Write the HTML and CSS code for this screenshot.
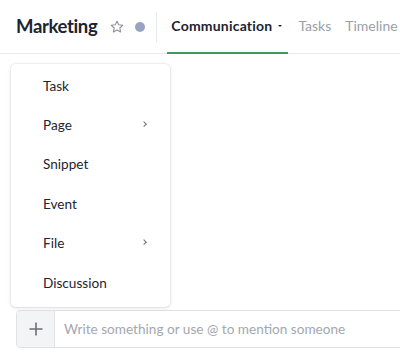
FILE: index.html
```html
<!DOCTYPE html>
<html>
<head>
<meta charset="utf-8">
<link rel="stylesheet" href="styles.css">
</head>
<body>
<div class="page">
  <header class="header">
    <h1 class="title">Marketing</h1>
    <svg class="star" width="16" height="16" viewBox="0 0 24 24"><path d="M12 3.2l2.6 5.5 6 .7-4.4 4.1 1.2 5.9L12 16.5l-5.4 2.9 1.2-5.9L3.4 9.4l6-.7z" fill="none" stroke="#8a8f98" stroke-width="1.6" stroke-linejoin="round"/></svg>
    <span class="dot"></span>
    <span class="sep"></span>
    <nav class="tabs">
      <div class="tab active">Communication <span class="caret"></span></div>
      <div class="tab">Tasks</div>
      <div class="tab">Timeline</div>
    </nav>
  </header>
  <div class="feed"></div>
  <div class="composer">
    <div class="plus">
      <svg width="14" height="14" viewBox="0 0 14 14"><path d="M7 0.5v13M0.5 7h13" stroke="#6b6f76" stroke-width="1.6"/></svg>
    </div>
    <div class="placeholder">Write something or use @ to mention someone</div>
  </div>
  <ul class="menu">
    <li class="item">Task</li>
    <li class="item">Page <span class="chev"></span></li>
    <li class="item">Snippet</li>
    <li class="item">Event</li>
    <li class="item">File <span class="chev"></span></li>
    <li class="item">Discussion</li>
  </ul>
</div>
</body>
</html>
```
FILE: styles.css
```css
* { box-sizing: border-box; }
html, body { margin: 0; padding: 0; }
body {
  font-family: "Lato", "Open Sans", sans-serif;
  color: #1f2430;
  background: #fff;
  overflow: hidden;
}
.page {
  position: relative;
  height: 362px;
  width: 400px;
  display: flex;
  flex-direction: column;
  overflow: hidden;
}
.header {
  height: 54px;
  flex: none;
  display: flex;
  align-items: center;
  padding-left: 16px;
  border-bottom: 1px solid #e6e8eb;
}
.title {
  margin: 0 0 1px 0;
  font-size: 18.5px;
  font-weight: 700;
  color: #1c2331;
  letter-spacing: -0.35px;
}
.star { margin-left: 12px; flex: none; }
.dot {
  width: 10px; height: 10px;
  border-radius: 50%;
  background: #98a4c0;
  margin-left: 10px;
  flex: none;
}
.sep {
  width: 1px;
  height: 30px;
  background: #e6e8eb;
  margin-left: 11px;
  flex: none;
}
.tabs {
  display: flex;
  align-self: stretch;
  margin-left: 10px;
  gap: 6px;
}
.tab {
  display: flex;
  align-items: center;
  font-size: 14px;
  color: #9aa0a8;
  white-space: nowrap;
  margin-bottom: -1px;
  border-bottom: 2px solid transparent;
  padding: 0 4px 1px 4px;
}
.tab.active {
  font-weight: 700;
  color: #1c2331;
  letter-spacing: 0.2px;
  border-bottom-color: #3c9a5f;
  padding-right: 6px;
}
.caret {
  display: inline-block;
  width: 0; height: 0;
  border-left: 2.5px solid transparent;
  border-right: 2.5px solid transparent;
  border-top: 2.5px solid #1c2331;
  margin-left: 6px;
  margin-top: 1px;
}
.feed { flex: 1; }
.composer {
  flex: none;
  display: flex;
  height: 38px;
  width: 400px;
  margin: 0 0 14px 16px;
  border: 1px solid #dfe1e5;
  border-radius: 4px;
}
.plus {
  width: 38px;
  flex: none;
  display: flex;
  align-items: center;
  justify-content: center;
  background: #f3f4f6;
  border-right: 1px solid #dfe1e5;
  border-radius: 4px 0 0 4px;
}
.placeholder {
  display: flex;
  align-items: center;
  padding-left: 9px;
  font-size: 13.6px;
  color: #a3a7ae;
}
.menu {
  position: absolute;
  top: 64px;
  left: 11px;
  width: 159px;
  height: 243px;
  margin: 0;
  padding: 2px 0 0 0;
  list-style: none;
  background: #fff;
  border-radius: 5px;
  box-shadow: 0 0 0 1px rgba(0,0,0,0.04), 0 1px 4px rgba(0,0,0,0.12);
}
.item {
  position: relative;
  height: 39.4px;
  display: flex;
  align-items: center;
  padding-left: 32px;
  font-size: 13.6px;
  color: #1f2430;
}
.chev {
  position: absolute;
  left: 131px;
  top: 50%;
  width: 4px; height: 4px;
  border-right: 1.3px solid #6b6f76;
  border-top: 1.3px solid #6b6f76;
  transform: translateY(-70%) rotate(45deg);
}
```
